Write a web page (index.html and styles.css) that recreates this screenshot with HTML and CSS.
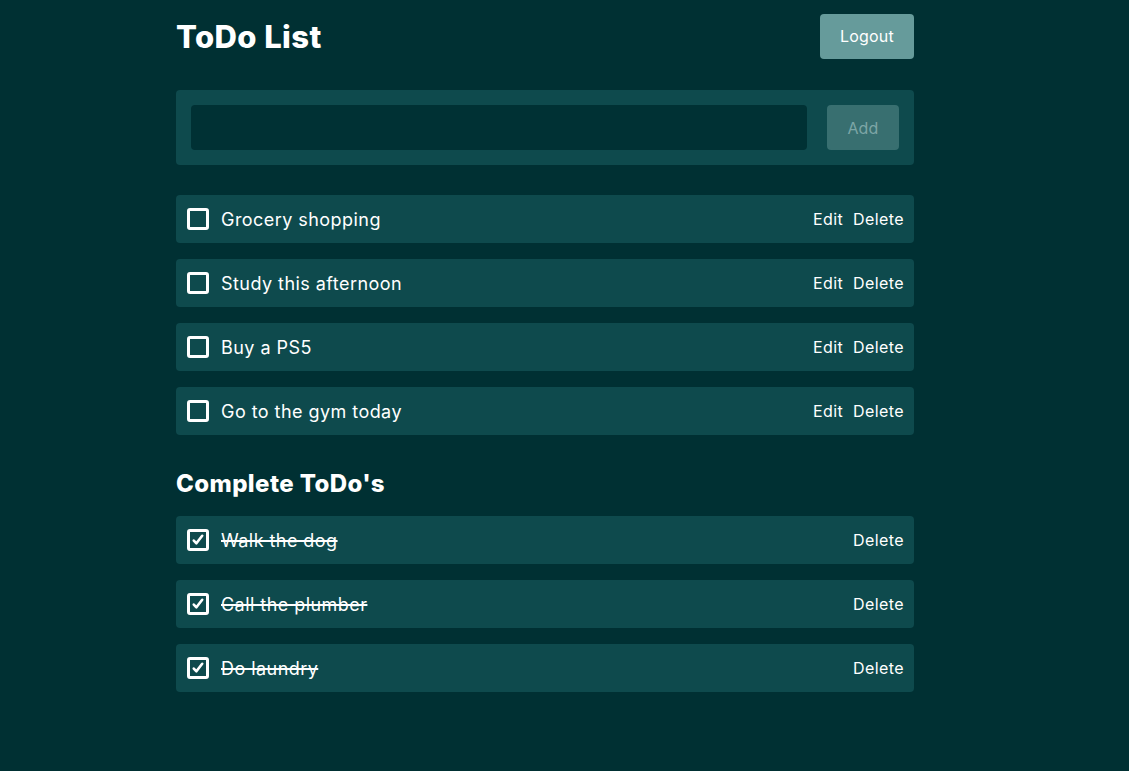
FILE: index.html
```html
<!DOCTYPE html>
<html lang="en">
<head>
<meta charset="utf-8">
<title>ToDo List</title>
<link rel="stylesheet" href="styles.css">
</head>
<body>
<main class="app">
  <header class="header">
    <h1 class="title">ToDo List</h1>
    <button class="btn-logout">Logout</button>
  </header>

  <form class="add-form">
    <input class="add-input" type="text">
    <button class="btn-add" type="button">Add</button>
  </form>

  <ul class="list">
    <li class="item">
      <span class="check"></span>
      <span class="label">Grocery shopping</span>
      <span class="actions"><span class="action">Edit</span><span class="action">Delete</span></span>
    </li>
    <li class="item">
      <span class="check"></span>
      <span class="label">Study this afternoon</span>
      <span class="actions"><span class="action">Edit</span><span class="action">Delete</span></span>
    </li>
    <li class="item">
      <span class="check"></span>
      <span class="label">Buy a PS5</span>
      <span class="actions"><span class="action">Edit</span><span class="action">Delete</span></span>
    </li>
    <li class="item">
      <span class="check"></span>
      <span class="label">Go to the gym today</span>
      <span class="actions"><span class="action">Edit</span><span class="action">Delete</span></span>
    </li>
  </ul>

  <h2 class="subtitle">Complete ToDo's</h2>

  <ul class="list">
    <li class="item">
      <span class="check checked"><svg viewBox="0 0 16 16" width="14" height="14"><path d="M3.2 8.6l3 3.2L12.8 3.2" fill="none" stroke="#fff" stroke-width="3" stroke-linecap="round" stroke-linejoin="round"/></svg></span>
      <span class="label done">Walk the dog</span>
      <span class="actions"><span class="action">Delete</span></span>
    </li>
    <li class="item">
      <span class="check checked"><svg viewBox="0 0 16 16" width="14" height="14"><path d="M3.2 8.6l3 3.2L12.8 3.2" fill="none" stroke="#fff" stroke-width="3" stroke-linecap="round" stroke-linejoin="round"/></svg></span>
      <span class="label done">Call the plumber</span>
      <span class="actions"><span class="action">Delete</span></span>
    </li>
    <li class="item">
      <span class="check checked"><svg viewBox="0 0 16 16" width="14" height="14"><path d="M3.2 8.6l3 3.2L12.8 3.2" fill="none" stroke="#fff" stroke-width="3" stroke-linecap="round" stroke-linejoin="round"/></svg></span>
      <span class="label done">Do laundry</span>
      <span class="actions"><span class="action">Delete</span></span>
    </li>
  </ul>
</main>
</body>
</html>
```

FILE: styles.css
```css
* { box-sizing: border-box; }
html, body {
  margin: 0;
  padding: 0;
  background: #003033;
  color: #ffffff;
  font-family: "Inter", "Noto Sans", sans-serif;
}
.app {
  width: 738px;
  margin-left: 176px;
  padding-top: 14px;
}
.header {
  display: flex;
  justify-content: space-between;
  align-items: center;
  height: 45px;
}
.title {
  margin: 0;
  font-size: 31px;
  font-weight: 800;
  letter-spacing: 0.4px;
  line-height: 1;
  margin-top: -1px;
}
.btn-logout {
  width: 94px;
  height: 45px;
  border: 0;
  border-radius: 4px;
  background: #669b9b;
  color: #ffffff;
  font-family: inherit;
  font-size: 16px;
  letter-spacing: 0.2px;
  padding-bottom: 2px;
}
.add-form {
  margin-top: 31px;
  display: flex;
  gap: 20px;
  padding: 15px;
  background: #0e4a4d;
  border-radius: 4px;
}
.add-input {
  flex: 1;
  height: 45px;
  border: 0;
  border-radius: 4px;
  background: #003134;
  outline: none;
}
.btn-add {
  width: 72px;
  height: 45px;
  border: 0;
  border-radius: 4px;
  background: #386f70;
  color: #7da6a6;
  font-family: inherit;
  font-size: 16px;
  letter-spacing: 0.2px;
}
.list {
  list-style: none;
  margin: 30px 0 0;
  padding: 0;
  display: flex;
  flex-direction: column;
  gap: 16px;
}
.item {
  display: flex;
  align-items: center;
  height: 48px;
  padding: 0 10px 0 11px;
  background: #0e4a4d;
  border-radius: 4px;
}
.check {
  width: 22px;
  height: 22px;
  border: 3px solid #ffffff;
  border-radius: 3px;
  display: flex;
  align-items: center;
  justify-content: center;
  flex-shrink: 0;
}
.label {
  margin-left: 12px;
  font-size: 18px;
  letter-spacing: 0.45px;
  flex: 1;
}
.label.done {
  text-decoration: line-through;
  text-decoration-thickness: 1.5px;
}
.actions {
  display: flex;
  gap: 10px;
  font-size: 16px;
  letter-spacing: 0.4px;
}
.subtitle {
  margin: 35px 0 0;
  font-size: 24px;
  font-weight: 800;
  letter-spacing: 0.4px;
  line-height: 28px;
}
.subtitle + .list { margin-top: 18px; }
```
